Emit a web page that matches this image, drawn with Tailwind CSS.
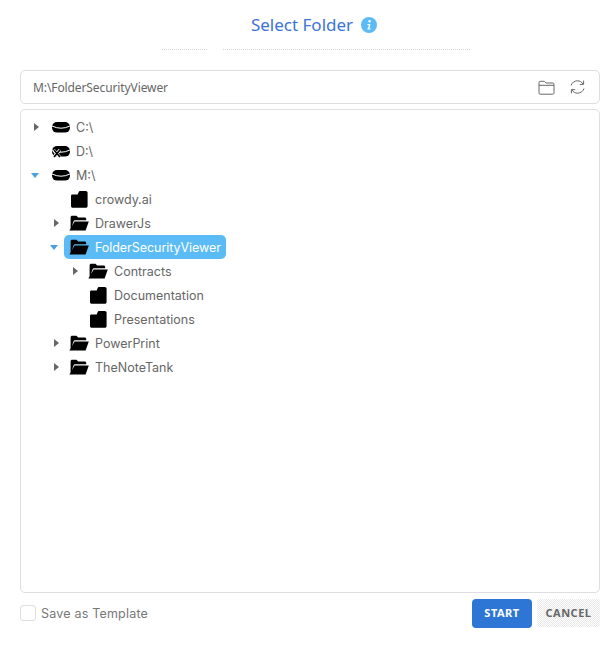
<!DOCTYPE html>
<html>
<head>
<meta charset="utf-8">
<script src="https://cdn.jsdelivr.net/npm/@tailwindcss/browser@4"></script>
</head>
<body class="bg-white">
<svg width="0" height="0" class="absolute">
  <defs>
    <g id="disk"><rect x="0" y="0" width="18" height="10.6" rx="5" fill="#000"/><path d="M0 4Q9 8.4 18 4" fill="none" stroke="#fff" stroke-width="1"/></g>
    <path id="closed" d="M1 5C1 4.2 1.6 3.6 2.4 3.6H7.6L8.6 1.2C8.9.5 9.5 0 10.3 0H15.8C16.8 0 17.6.8 17.6 1.8V15C17.6 16 16.8 16.8 15.8 16.8H2.8C1.8 16.8 1 16 1 15Z" fill="#000"/>
    <path id="open" d="M1.6 15V2.4C1.6 1.5 2.3.8 3.2.8H7.4L9.2 2.6H15.6C16.5 2.6 17.2 3.3 17.2 4.2V5.2H6.6C5.6 5.2 4.9 5.7 4.5 6.6L1.6 15ZM5.6 6.4H19.8L16.6 15.6H.4Z" fill="#000"/>
  </defs>
</svg>
<div class="w-[616px] h-[645px] flex flex-col pl-5 pr-4 font-['Inter','Liberation_Sans',sans-serif]">
  <header class="h-[50px] shrink-0 relative flex items-start justify-center pt-[12px] pl-[8px]">
    <h1 class="text-[17px] leading-[26px] font-['Noto_Sans',sans-serif] font-normal text-[#3b74d8]">Select Folder</h1>
    <svg class="ml-2 mt-[5px]" width="16" height="16" viewBox="0 0 16 16"><circle cx="8" cy="8" r="8" fill="#5bbcf5"/><circle cx="8.6" cy="4.2" r="1.3" fill="#fff"/><path d="M6.4 7H9.4L8.5 11.4H9.6V12.4H6.3V11.4H7.1L7.8 8H6.4Z" fill="#fff"/></svg>
    <div class="absolute top-[49px] left-[142px] w-[45px] border-t border-dotted border-[#d8d8d8]"></div>
    <div class="absolute top-[49px] left-[203px] w-[247px] border-t border-dotted border-[#d8d8d8]"></div>
  </header>
  <div class="mt-5 h-[34px] shrink-0 border border-[#dedede] rounded-[5px] flex items-center pl-3 pr-[13px]">
    <span class="flex-1 pt-[2px] text-[12px] tracking-[-0.1px] font-['Noto_Sans',sans-serif] text-[#666]">M:\FolderSecurityViewer</span>
    <svg class="-translate-x-[-1px]" width="17" height="15" viewBox="0 0 17 15" fill="none" stroke="#666" stroke-width="1"><path d="M1 13V2.5C1 1.8 1.5 1.3 2.2 1.3H6.4L8 3H14.8C15.5 3 16 3.5 16 4.2V13C16 13.7 15.5 14.2 14.8 14.2H2.2C1.5 14.2 1 13.7 1 13Z"/><path d="M1 5.3H16"/></svg>
    <svg class="ml-[15px]" width="17" height="16" viewBox="0 0 17 16" fill="none" stroke="#666" stroke-width="1"><path d="M2 6.5C3 3.6 5.4 1.8 8.4 1.8C10.8 1.8 12.7 2.9 14 5"/><path d="M14.6 1.6V5.4H10.8"/><path d="M15 9.5C14 12.4 11.6 14.2 8.6 14.2C6.2 14.2 4.3 13.1 3 11"/><path d="M2.4 14.4V10.6H6.2"/></svg>
  </div>
  <div class="mt-[5px] h-[484px] shrink-0 border border-[#dedede] rounded-[5px] pt-[5px] text-[12.5px] text-[#666]">
    <ul class="flex flex-col">
      <li class="h-6 flex items-center pl-[13px]">
        <svg class="w-[5px] h-2" viewBox="0 0 5 8"><path d="M0 0L5 4L0 8Z" fill="#666"/></svg>
        <svg class="ml-[13px]" width="18" height="11" viewBox="0 0 18 11"><use href="#disk"/></svg>
        <span class="ml-[6px] pt-[2px]">C:\</span>
      </li>
      <li class="h-6 flex items-center pl-[31px]">
        <svg width="18" height="13" viewBox="0 0 18 13"><use href="#disk" y="1"/><path d="M1.5 5L8 12.5M8 5L1.5 12.5" stroke="#fff" stroke-width="3.4"/><path d="M2 5L8 12M8 5L2 12" stroke="#000" stroke-width="1.8"/></svg>
        <span class="ml-[6px] pt-[2px]">D:\</span>
      </li>
      <li class="h-6 flex items-center pl-[10px]">
        <svg class="w-2 h-[5px]" viewBox="0 0 8 5"><path d="M0 0H8L4 5Z" fill="#4a9fdf"/></svg>
        <svg class="ml-[13px]" width="18" height="11" viewBox="0 0 18 11"><use href="#disk"/></svg>
        <span class="ml-[6px] pt-[2px]">M:\</span>
      </li>
      <li class="h-6 flex items-center pl-[49px]">
        <svg width="19" height="17" viewBox="0 0 19 17"><use href="#closed"/></svg>
        <span class="ml-[6px] pt-[2px]">crowdy.ai</span>
      </li>
      <li class="h-6 flex items-center pl-[33px]">
        <svg class="w-[5px] h-2" viewBox="0 0 5 8"><path d="M0 0L5 4L0 8Z" fill="#666"/></svg>
        <svg class="ml-[10px]" width="20" height="16" viewBox="0 0 20 16"><use href="#open"/></svg>
        <span class="ml-[6px] pt-[2px]">DrawerJs</span>
      </li>
      <li class="h-6 flex items-center pl-[29px]">
        <svg class="w-2 h-[5px]" viewBox="0 0 8 5"><path d="M0 0H8L4 5Z" fill="#4a9fdf"/></svg>
        <div class="ml-[6px] h-6 w-[162px] rounded-[5px] bg-[#5bbcf5] flex items-center pl-[5px] text-white">
          <svg width="20" height="16" viewBox="0 0 20 16"><use href="#open"/></svg>
          <span class="ml-[6px] pt-[2px] tracking-[-0.05px]">FolderSecurityViewer</span>
        </div>
      </li>
      <li class="h-6 flex items-center pl-[52px]">
        <svg class="w-[5px] h-2" viewBox="0 0 5 8"><path d="M0 0L5 4L0 8Z" fill="#666"/></svg>
        <svg class="ml-[10px]" width="20" height="16" viewBox="0 0 20 16"><use href="#open"/></svg>
        <span class="ml-[6px] pt-[2px]">Contracts</span>
      </li>
      <li class="h-6 flex items-center pl-[68px]">
        <svg width="19" height="17" viewBox="0 0 19 17"><use href="#closed"/></svg>
        <span class="ml-[6px] pt-[2px]">Documentation</span>
      </li>
      <li class="h-6 flex items-center pl-[68px]">
        <svg width="19" height="17" viewBox="0 0 19 17"><use href="#closed"/></svg>
        <span class="ml-[6px] pt-[2px]">Presentations</span>
      </li>
      <li class="h-6 flex items-center pl-[33px]">
        <svg class="w-[5px] h-2" viewBox="0 0 5 8"><path d="M0 0L5 4L0 8Z" fill="#666"/></svg>
        <svg class="ml-[10px]" width="20" height="16" viewBox="0 0 20 16"><use href="#open"/></svg>
        <span class="ml-[6px] pt-[2px]">PowerPrint</span>
      </li>
      <li class="h-6 flex items-center pl-[33px]">
        <svg class="w-[5px] h-2" viewBox="0 0 5 8"><path d="M0 0L5 4L0 8Z" fill="#666"/></svg>
        <svg class="ml-[10px]" width="20" height="16" viewBox="0 0 20 16"><use href="#open"/></svg>
        <span class="ml-[6px] pt-[2px]">TheNoteTank</span>
      </li>
    </ul>
  </div>
  <footer class="mt-[5px] h-[30px] shrink-0 flex items-center">
    <span class="w-4 h-4 border border-[#dedede] rounded-[3px] bg-white"></span>
    <span class="ml-[5px] flex-1 pt-[2px] text-[12.5px] tracking-[0.2px] text-[#777]">Save as Template</span>
    <button class="w-[60px] h-[29px] rounded-[4px] bg-[#2d76d6] text-white text-[11px] font-bold tracking-[0.5px] font-['Noto_Sans',sans-serif]">START</button>
    <button class="ml-[5px] w-[63px] h-[28px] rounded-[3px] bg-[repeating-conic-gradient(#e8e8e8_0_25%,#fff_0_50%)] bg-[length:2px_2px] text-[#666] text-[11px] font-bold tracking-[0.5px] font-['Noto_Sans',sans-serif]">CANCEL</button>
  </footer>
</div>
</body>
</html>
